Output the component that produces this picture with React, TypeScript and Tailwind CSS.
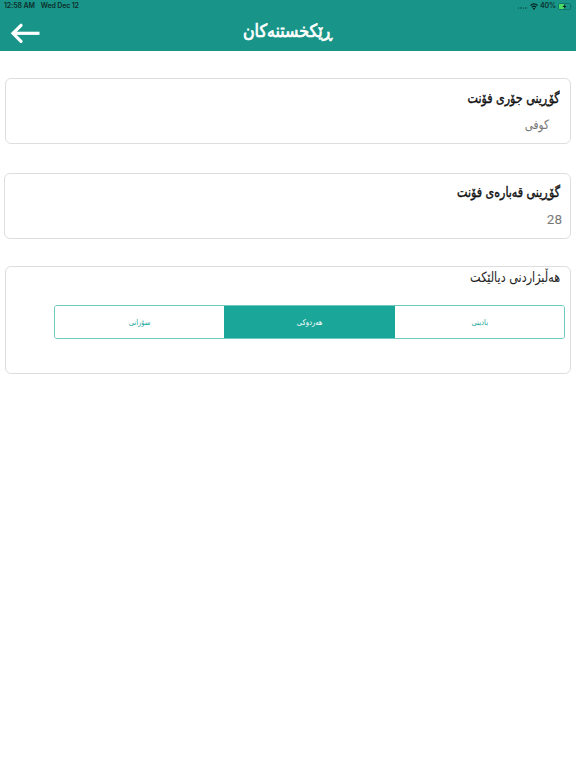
import type { ReactNode } from 'react';

const KURDISH = "font-['DejaVu_Sans_Condensed','DejaVu_Sans',sans-serif]";

const DIALECTS = [
    { id: 'badini', label: 'بادینی', active: false },
    { id: 'both', label: 'هەردوکی', active: true },
    { id: 'sorani', label: 'سۆرانی', active: false },
];

function StatusBar() {
    return (
        <div dir="ltr" className="flex h-3 items-center justify-between pl-1 pr-[4px] font-['Inter',sans-serif] text-[7px] font-semibold leading-3 text-[#0b2f2b]">
            <div className="flex gap-[6px] tracking-[-0.13px]">
                <span>12:58 AM</span>
                <span>Wed Dec 12</span>
            </div>
            <div className="flex items-center">
                {/* No cellular signal */}
                <div className="mr-[3px] mt-[4px] flex gap-px">
                    {[0, 1, 2, 3].map((i) => (
                        <span key={i} className="size-[1.5px] rounded-full bg-[#0f6259]" />
                    ))}
                </div>
                <svg className="mr-[2px] h-[7px] w-2" viewBox="0 0 16 13" preserveAspectRatio="none" fill="none" stroke="#06211e" strokeWidth="2.3">
                    <path d="M1 4.6a10 10 0 0 1 14 0" />
                    <path d="M3.7 7.8a6.2 6.2 0 0 1 8.6 0" />
                    <path d="M8 12.8 5.6 10.2a3.4 3.4 0 0 1 4.8 0Z" fill="#06211e" stroke="none" />
                </svg>
                <span className="mr-[2px] tracking-[-0.1px]">40%</span>
                <svg className="h-[7px] w-[14px]" viewBox="0 0 29 14" preserveAspectRatio="none" fill="none">
                    <rect x="1" y="1" width="25" height="12" rx="3" stroke="#0f6b60" strokeWidth="1.4" />
                    <rect x="2" y="2" width="11" height="10" rx="1.5" fill="#4cdb64" />
                    <path d="M27.2 4.8c1.6.8 1.6 3.6 0 4.4Z" fill="#0f6b60" />
                    <path d="m15 1.8-6 6h4l-1.2 4.4 6-6h-4Z" fill="#06211e" />
                </svg>
            </div>
        </div>
    );
}

function Card({ className, children }: { className: string; children: ReactNode }) {
    return (
        <section className={`flex flex-col items-start rounded-md border border-[#dedede] bg-white ${className}`}>
            {children}
        </section>
    );
}

export default function App() {
    return (
        <div dir="rtl" className={`min-h-screen bg-white ${KURDISH}`}>
            <header className="h-[51px] bg-[#199488]">
                <StatusBar />
                <div dir="ltr" className="grid h-[39px] grid-cols-[1fr_auto_1fr] items-center">
                    <button aria-label="Back" className="ml-[10px] mt-[3px] w-[30px]">
                        <svg className="h-5 w-[30px]" viewBox="0 0 30 20" fill="none" stroke="#fff" strokeWidth="3.2">
                            <path d="M3 10.3h26.5" />
                            <path d="M11 2.3 3 10.3l8 8" strokeLinecap="round" strokeLinejoin="miter" />
                        </svg>
                    </button>
                    <h1 dir="rtl" className="-mt-[2px] scale-x-[0.98] text-[18px] leading-6 text-white [-webkit-text-stroke:0.7px_white]">ڕێکخستنەکان</h1>
                    <span />
                </div>
            </header>

            <main className="flex flex-col pl-[5px] pr-[5px] pt-[27px]">
                <Card className="h-[66px] pr-[10px] pt-[9px]">
                    <h2 className="origin-right scale-x-[0.88] text-[14px] leading-5 text-[#111] [-webkit-text-stroke:0.4px_#111]">گۆڕینی جۆری فۆنت</h2>
                    <p className="mr-[11px] mt-[7px] origin-right scale-x-[0.9] text-[13px] leading-5 text-[#777]">کوفی</p>
                </Card>
                <Card className="mt-[29px] h-[66px] w-[567px] pr-[10px] pt-[8px]">
                    <h2 className="origin-right scale-x-[0.88] text-[14px] leading-5 text-[#111] [-webkit-text-stroke:0.4px_#111]">گۆڕینی قەبارەی فۆنت</h2>
                    <p className="-mr-[2px] mt-[7px] font-['Roboto',sans-serif] text-[13.5px] leading-5 text-[#777]">28</p>
                </Card>
                <Card className="mt-[27px] h-[108px] pr-[5px]">
                    <h2 className="mr-[5px] origin-right scale-x-[0.89] text-[14px] leading-5 text-[#222]">هەڵبژاردنی دیالێکت</h2>
                    <div className="mt-[18px] grid h-[34px] w-[511px] grid-cols-[169px_171px_169px] overflow-hidden rounded-[3px] border border-[#6ec9c0]">
                        {DIALECTS.map((d) => (
                            <button
                                key={d.id}
                                className={`pt-px text-[8px] leading-4 ${d.active ? 'bg-[#1ba69a] text-white' : 'bg-white text-[#1ba69a]'}`}
                            >
                                <span className="inline-block scale-x-[0.94]">{d.label}</span>
                            </button>
                        ))}
                    </div>
                </Card>
            </main>
        </div>
    );
}
